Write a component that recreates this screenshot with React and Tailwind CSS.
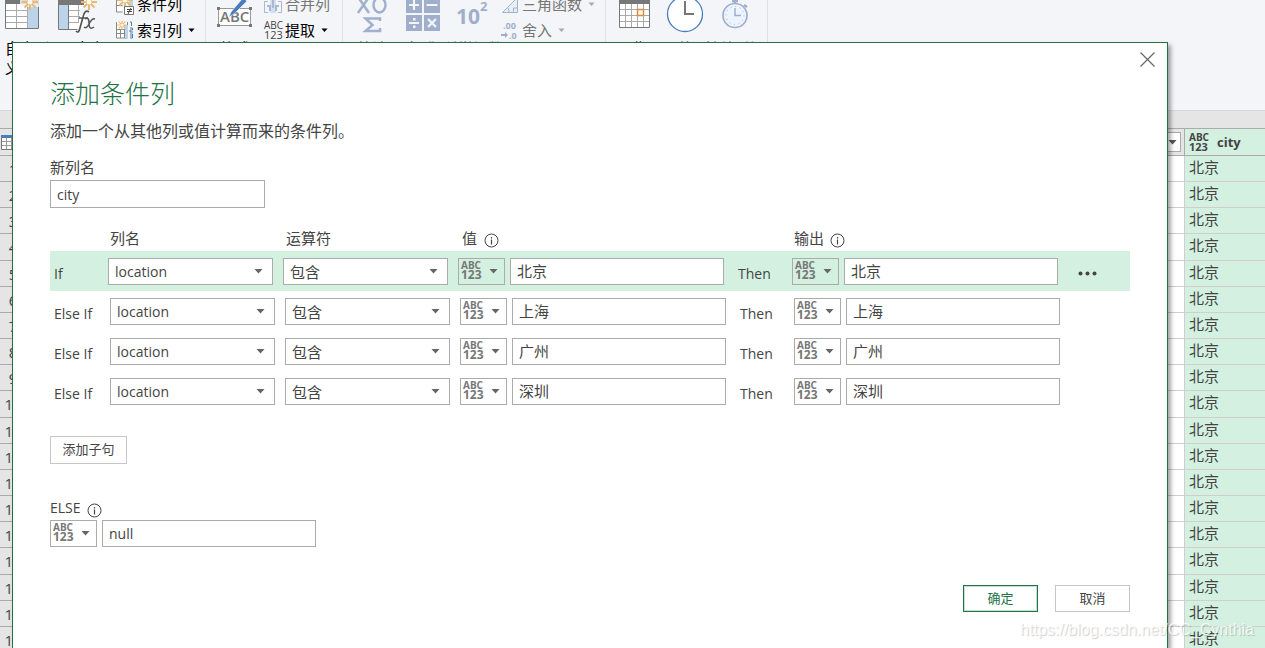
import React from "react";
import clsx from "clsx";

const rules = [
  { label: "If", value: "北京", active: true },
  { label: "Else If", value: "上海" },
  { label: "Else If", value: "广州" },
  { label: "Else If", value: "深圳" },
];

const rowNumbers = Array.from({ length: 19 }, (_, i) => i + 1);

function Caret({ className }) {
  return (
    <svg className={clsx("h-[5px] w-[9px] shrink-0", className)} viewBox="0 0 9 5" fill="currentColor" aria-hidden="true">
      <path d="M0.5 0h8L4.5 4.5z" />
    </svg>
  );
}

function Spark({ x, y }) {
  return (
    <g transform={`translate(${x} ${y})`} stroke="#e9b872" strokeWidth="2">
      <path d="M0-8V8M-8 0H8M-5.500-5.500L5.500 5.500M5.500-5.500L-5.500 5.500" />
      <circle r="2.500" fill="#fff8e8" stroke="none" />
    </g>
  );
}

function InfoIcon() {
  return (
    <svg className="mt-[5px] size-[15px] shrink-0" viewBox="0 0 15 15" fill="none" stroke="#444" aria-hidden="true">
      <circle cx="7.500" cy="7.500" r="6.500" />
      <path d="M7.500 6.500v5M7.500 4v1.400" strokeWidth="1.200" />
    </svg>
  );
}

function AnyType({ bold = true, className }) {
  return (
    <span
      className={clsx(
        "flex flex-col text-left leading-[10px]",
        bold ? "text-[12px] font-bold text-[#777]" : "text-[11px] text-[#444]",
        className
      )}
    >
      <span className="text-[10px]">ABC</span>
      <span>123</span>
    </span>
  );
}

function TypeButton({ label }) {
  return (
    <button
      type="button"
      aria-label={label}
      className="flex h-[27px] w-[47px] shrink-0 items-center justify-between border border-[#ababab] pr-[6px] pl-[2px] text-[#666]"
    >
      <AnyType className="pb-[3px]" />
      <Caret />
    </button>
  );
}

function Select({ label, value, cjk }) {
  return (
    <div className="relative mr-[10px] w-[165px] shrink-0">
      <select
        aria-label={label}
        defaultValue={value}
        className={clsx(
          "block h-[27px] w-full appearance-none border border-[#ababab] bg-white pl-[6px] leading-5 outline-none",
          cjk ? "text-[15px]" : "text-[14px]"
        )}
      >
        <option>{value}</option>
      </select>
      <Caret className="pointer-events-none absolute top-[11px] right-[10px] text-[#666]" />
    </div>
  );
}

function TextBox({ cjk, ...props }) {
  return (
    <input
      type="text"
      className={clsx(
        "h-[27px] w-[214px] shrink-0 border border-[#ababab] bg-white px-[6px] leading-5 outline-none",
        cjk ? "pb-[2px] text-[15px]" : "text-[14px]"
      )}
      {...props}
    />
  );
}

function RuleRow({ label, value, active }) {
  return (
    <div className={clsx("flex h-10 items-start pt-[7px]", active && "bg-[#d3f0e0]")}>
      <span className={clsx("shrink-0 pt-[6px] pl-1 text-[14px] leading-5", active ? "w-[58px]" : "w-[60px]")}>
        {label}
      </span>
      <Select label="列名" value="location" />
      <Select label="运算符" value="包含" cjk />
      <TypeButton label="值类型" />
      <div className="w-[5px] shrink-0" />
      <TextBox aria-label="值" defaultValue={value} cjk />
      <span className="w-[68px] shrink-0 pt-[6px] pl-[14px] text-[14px] leading-5">Then</span>
      <TypeButton label="输出类型" />
      <div className="w-[5px] shrink-0" />
      <TextBox aria-label="输出" defaultValue={value} cjk />
      {active && (
        <button type="button" aria-label="更多" className="mt-[13px] ml-5 shrink-0">
          <svg className="h-[5px] w-[19px]" viewBox="0 0 19 5" fill="#444">
            <circle cx="2.500" cy="2.500" r="2" />
            <circle cx="9.500" cy="2.500" r="2" />
            <circle cx="16.500" cy="2.500" r="2" />
          </svg>
        </button>
      )}
    </div>
  );
}

function BigButton({ label, className, children }) {
  return (
    <button type="button" className={clsx("flex shrink-0 flex-col items-center", className)}>
      <span className="flex h-[38px] items-start">{children}</span>
      <span className="text-center text-[15px] leading-5 whitespace-pre">{label}</span>
    </button>
  );
}

function SmallButton({ label, caret, dim, children }) {
  return (
    <button type="button" className={clsx("flex h-[26px] items-center", dim && "text-[#777]")}>
      <span className="flex w-[21px] justify-start">{children}</span>
      <span className="text-[15px] leading-5 whitespace-nowrap">{label}</span>
      {caret && <Caret className={clsx("ml-[6px] !w-[7px]", dim && "text-[#aaa]")} />}
    </button>
  );
}

function Ribbon() {
  return (
    <header className="flex h-[110px] items-start overflow-hidden bg-[#f4f5f8] text-black">
      <div className="flex h-full w-[206px] shrink-0 border-r border-[#dfe1e5]">
        <BigButton label={"自定\n义列"} className="w-[40px]">
          <svg width="38" height="29" viewBox="0 0 38 29" className="ml-1">
            <path d="M2 0h34v28H2z" fill="#fff" />
            <path d="M25 4h11v24H25z" fill="#bdd3ea" />
            <path d="M2 0h34v4H2z" fill="#777" />
            <path d="M2 10.500h23M2 16.500h23M2 22.500h23M13.500 4v24M24.500 4v24" stroke="#aaa" />
            <path d="M2.500 0v28.500h33V0" fill="none" stroke="#777" />
            <path d="M17 0h20v7H17z" fill="#f4f5f8" opacity=".8" />
            <Spark x={27} y={2} />
          </svg>
        </BigButton>
        <BigButton label={"调用自定\n义函数"} className="w-[70px]">
          <svg width="42" height="34" viewBox="0 0 42 34" className="ml-1">
            <path d="M2 0h28v29H2z" fill="#fff" />
            <path d="M2 4h10v25H2z" fill="#bdd3ea" />
            <path d="M2 0h26v5H2z" fill="#777" />
            <path d="M12 10.500h16M12 16.500h12M12 22.500h11M22.500 5v18" stroke="#aaa" />
            <path d="M2.500 0v29.500h19M12.500 4v25" fill="none" stroke="#777" />
            <path d="M24 8h10v7H24z" fill="#f4f5f8" />
            <path d="M33 12c-3-2-5 0-6 5l-3 11c-1 4-2 5-4 3M23 18h9" fill="none" stroke="#555" strokeWidth="1.700" />
            <path d="M29 19c3-2 4 0 4 4s1 7 5 4M39 19c-3-1-5 3-6 5s-3 5-5 3" fill="none" stroke="#555" strokeWidth="1.500" />
            <Spark x={33} y={2} />
          </svg>
        </BigButton>
        <div className="-mt-[9px] ml-[6px] flex flex-col">
          <SmallButton label="条件列">
            <svg width="19" height="23" viewBox="0 0 19 23">
              <path d="M.5 6v13h6M.5 12.500h6" fill="#fff" stroke="#888" />
              <path d="M13 5h4v8h-4z" fill="#bdd3ea" />
              <Spark x={9} y={7} />
              <path d="M8.500 13.500h9v8h-9z" fill="#fff" stroke="#777" />
              <path d="M11 16.500h5M11 18.500h5M15 15l-3 6" stroke="#444" />
            </svg>
          </SmallButton>
          <SmallButton label="索引列" caret>
            <svg width="18" height="18" viewBox="0 0 18 18">
              <path d="M.5 1v16h11V1" fill="#fff" stroke="#888" />
              <path d="M8 4h4v13H8z" fill="#bdd3ea" />
              <path d="M1 8.500h8M1 12.500h8M4.500 8v9M8.500 8v9" stroke="#888" />
              <g transform="translate(6 4) scale(.6)"><Spark x={0} y={0} /></g>
              <path d="M14 1h1.500v4M14 7h2.500v2H14v2h3M14 13h2.500v4H14M14 15h2" fill="none" stroke="#4a7ebb" />
            </svg>
          </SmallButton>
        </div>
      </div>

      <div className="flex h-full w-[137px] shrink-0 border-r border-[#dfe1e5]">
        <BigButton label="格式" className="w-[58px]">
          <svg width="36" height="28" viewBox="0 0 36 28">
            <path d="M1.500 8.500h32v17h-32z" fill="#fff" stroke="#999" />
            <path d="M0 7h3v3H0zM32 7h3v3h-3zM0 24h3v3H0zM32 24h3v3h-3z" fill="#777" />
            <text x="3" y="22" fontSize="15" fill="#777" fontFamily="Open Sans" fontWeight="600">ABC</text>
            <path d="M12 17l2-5L26-2l4 3-13 13z" fill="#4a7ebb" stroke="#fff" strokeWidth=".5" />
          </svg>
        </BigButton>
        <div className="-mt-[9px] flex flex-col">
          <SmallButton label="合并列" dim>
            <svg width="19" height="20" viewBox="0 0 19 20">
              <path d="M6 5h6v14H6z" fill="#cfe0f3" />
              <path d="M4 7.500H.5v11H4M14 7.500h3.500v11H14" fill="none" stroke="#a9b7cf" />
              <path d="M9 5v9M3 12h3v5M15 12h-3v5" stroke="#a9b7cf" strokeWidth="2" fill="none" />
            </svg>
          </SmallButton>
          <SmallButton label="提取" caret>
            <AnyType bold={false} />
          </SmallButton>
        </div>
      </div>

      <div className="flex h-full w-[263px] shrink-0 border-r border-[#dfe1e5] text-[#777]">
        <BigButton label="统计" className="w-[58px]">
          <svg width="32" height="34" viewBox="0 0 32 34" fill="none" stroke="#a1b0cc" strokeWidth="2.500">
            <path d="M2-3l11 16M13-3L2 13" />
            <ellipse cx="23.500" cy="5" rx="6" ry="7.500" />
            <path d="M24 21v-2.500H9.500l7 6.500-7 6H24V28" />
          </svg>
        </BigButton>
        <BigButton label="标准" className="w-[44px]">
          <svg width="34" height="32" viewBox="0 0 34 32">
            <path d="M0-3h16v16H0zM18-3h16v16H18zM0 15h16v16H0zM18 15h16v16H18z" fill="#9fafcb" />
            <path d="M8 0v10M3 5h10M20.500 5h11M3 23h10M22 19l8 8M30 19l-8 8" stroke="#f4f5f8" strokeWidth="2.200" />
            <path d="M7 18h2.500v2.500H7zM7 25.500h2.500V28H7z" fill="#f4f5f8" />
          </svg>
        </BigButton>
        <BigButton label="科学记数" className="w-[56px]">
          <svg width="34" height="28" viewBox="0 0 34 28" fill="#9fafcb" fontFamily="Open Sans" fontWeight="700">
            <text x="0" y="24" fontSize="21">10</text>
            <text x="24" y="11" fontSize="13">2</text>
          </svg>
        </BigButton>
        <div className="-mt-[9px] flex flex-col">
          <SmallButton label="三角函数" caret dim>
            <svg width="18" height="19" viewBox="0 0 18 19" fill="#e6effa" stroke="#a1b0cc">
              <path d="M1.500 17.500l15-15v15zM8 17c0-3-1-4-2-5M12.500 17v-4H16" />
            </svg>
          </SmallButton>
          <SmallButton label="舍入" caret dim>
            <svg width="18" height="20" viewBox="0 0 18 20" fill="#9fafcb" fontFamily="Open Sans" fontWeight="700" fontSize="9">
              <text x="2" y="9">.00</text>
              <text x="8" y="19">.0</text>
              <path d="M0 14h4v-2l3 3-3 3v-2H0z" />
            </svg>
          </SmallButton>
        </div>
      </div>

      <div className="flex h-full w-[162px] shrink-0 border-r border-[#dfe1e5]">
        <BigButton label="日期" className="w-[56px]">
          <svg width="31" height="29" viewBox="0 0 31 29">
            <path d="M.5-1h30v28.500H.5z" fill="#fff" stroke="#777" />
            <path d="M0 0h31v4H0z" fill="#777" />
            <path d="M6.500 4v23M12.500 4v23M18.500 4v23M24.500 4v23M1 9.500h29M1 15.500h29M1 21.500h29" stroke="#aaa" />
            <path d="M18.500 9.500h6v6h-6z" fill="#fff" stroke="#e08a3c" strokeWidth="1.500" />
          </svg>
        </BigButton>
        <BigButton label="时间" className="w-[46px]">
          <svg width="38" height="33" viewBox="0 0 38 33" fill="none">
            <circle cx="19" cy="14" r="17.500" fill="#fff" stroke="#4a7ebb" strokeWidth="1.300" />
            <path d="M19 1v13h9" stroke="#777" strokeWidth="2" />
          </svg>
        </BigButton>
        <BigButton label="持续时间" className="w-[54px] text-[#777]">
          <svg width="28" height="29" viewBox="0 0 28 29" fill="none" stroke="#9fafcb">
            <path d="M11 1h6M14 0v4M23 5l3 2" strokeWidth="2.500" />
            <circle cx="14" cy="15.500" r="12" fill="#edf4fd" strokeWidth="1.700" />
            <path d="M14 8v7.500h6" strokeWidth="1.500" />
            <circle cx="14" cy="15.500" r="9" strokeDasharray="1 3.700" />
          </svg>
        </BigButton>
      </div>
    </header>
  );
}

function DataGrid() {
  return (
    <table className="w-full table-fixed border-separate border-spacing-0 text-[15px]">
      <thead>
        <tr className="h-7 bg-[#e5e5e5]">
          <th className="w-[26px] border-y border-[#ababab] p-0">
            <svg width="16" height="15" viewBox="0 0 16 15" className="ml-px" aria-label="表">
              <path d="M.5.5h15v14H.5z" fill="#fff" stroke="#777" />
              <path d="M0 0h16v3H0z" fill="#4a7ebb" />
              <path d="M5.500 3v11M10.500 3v11M1 6.500h14M1 10.500h14" stroke="#999" />
            </svg>
          </th>
          <th className="border-y border-r border-[#ababab] p-0">
            <button type="button" aria-label="筛选" className="mr-[3px] ml-auto flex h-5 w-[18px] items-center justify-center border border-[#ababab] bg-white text-[#555]">
              <Caret />
            </button>
          </th>
          <th className="w-[80px] border-y border-[#ababab] bg-[#d3f0e0] p-0 pl-1">
            <span className="flex items-center gap-2">
              <AnyType bold={false} />
              <span className="text-[13px] leading-5 font-bold text-[#444]">city</span>
            </span>
          </th>
        </tr>
      </thead>
      <tbody>
        {rowNumbers.map((n) => (
          <tr key={n} className={n % 6 === 4 ? "h-[27px]" : "h-[26px]"}>
            <td className="border-b border-[#ababab] bg-[#e5e5e5] p-0 text-center leading-5">{n}</td>
            <td className="border-r border-b border-[#d0cece] bg-white p-0" />
            <td className="border-b border-[#d0cece] bg-[#d3f0e0] p-0 pb-1 pl-1 leading-5">北京</td>
          </tr>
        ))}
      </tbody>
    </table>
  );
}

function ConditionalColumnDialog() {
  return (
    <div
      role="dialog"
      aria-label="添加条件列"
      className="absolute top-[42px] right-[97px] bottom-0 left-3 overflow-hidden border border-b-0 border-[#217346] bg-white px-[37px] pt-[34px] shadow-[3px_3px_4px_rgba(0,0,0,0.35)]"
    >
      <button type="button" aria-label="关闭" className="absolute top-[9px] right-3">
        <svg className="size-[15px]" viewBox="0 0 15 15" stroke="#666" strokeWidth="1.200">
          <path d="M.5.5l14 14M14.500.5l-14 14" />
        </svg>
      </button>

      <h1 className="text-[25px] leading-8 font-light text-[#217346]">添加条件列</h1>
      <p className="mt-3 text-[16px] leading-5">添加一个从其他列或值计算而来的条件列。</p>

      <label htmlFor="column-name" className="mt-4 block text-[15px] leading-5">
        新列名
      </label>
      <input
        id="column-name"
        type="text"
        defaultValue="city"
        className="mt-[3px] block h-7 w-[215px] border border-[#ababab] px-[6px] text-[14px] leading-5 outline-none"
      />

      <div className="mt-5 flex h-[23px] pl-[60px] text-[15px] leading-5">
        <span className="w-44 shrink-0">列名</span>
        <span className="w-44 shrink-0">运算符</span>
        <span className="flex w-[332px] shrink-0 gap-[7px]">
          值 <InfoIcon />
        </span>
        <span className="flex shrink-0 gap-[6px]">
          输出 <InfoIcon />
        </span>
      </div>
      {rules.map((rule) => (
        <RuleRow key={rule.value} {...rule} />
      ))}

      <button type="button" className="mt-[25px] block h-7 w-[77px] border border-[#c6c6c6] pb-[2px] text-[13px] leading-5">
        添加子句
      </button>

      <label htmlFor="else-value" className="mt-[34px] flex gap-[6px] text-[14px] leading-5">
        ELSE <InfoIcon />
      </label>
      <div className="mt-[2px] flex gap-[5px]">
        <TypeButton label="ELSE 类型" />
        <TextBox id="else-value" defaultValue="null" />
      </div>

      <div className="mt-[38px] flex justify-end gap-[17px] text-[13px] leading-5">
        <button
          type="button"
          className="h-[27px] w-[75px] border border-[#217346] pb-[2px] text-[#217346] shadow-[inset_0_0_0_1px_#c5e0d0]"
        >
          确定
        </button>
        <button type="button" className="h-[27px] w-[75px] border border-[#c6c6c6] pb-[2px]">
          取消
        </button>
      </div>
    </div>
  );
}

export default function App() {
  return (
    <div className="relative h-screen overflow-hidden bg-[#e5e5e5] font-['Open_Sans','Noto_Sans_CJK_SC',sans-serif] text-[#444]">
      <Ribbon />
      <div className="h-[18px] border-t border-[#d8d8d8] bg-[#e5e5e5]" />
      <DataGrid />
      <ConditionalColumnDialog />
      <p className="pointer-events-none absolute right-[11px] bottom-2 font-['Liberation_Sans',sans-serif] text-[16px] leading-5 text-white/80 [text-shadow:1px_1px_1px_rgba(0,0,0,0.2)]">
        https://blog.csdn.net/CC_Cynthia
      </p>
    </div>
  );
}
